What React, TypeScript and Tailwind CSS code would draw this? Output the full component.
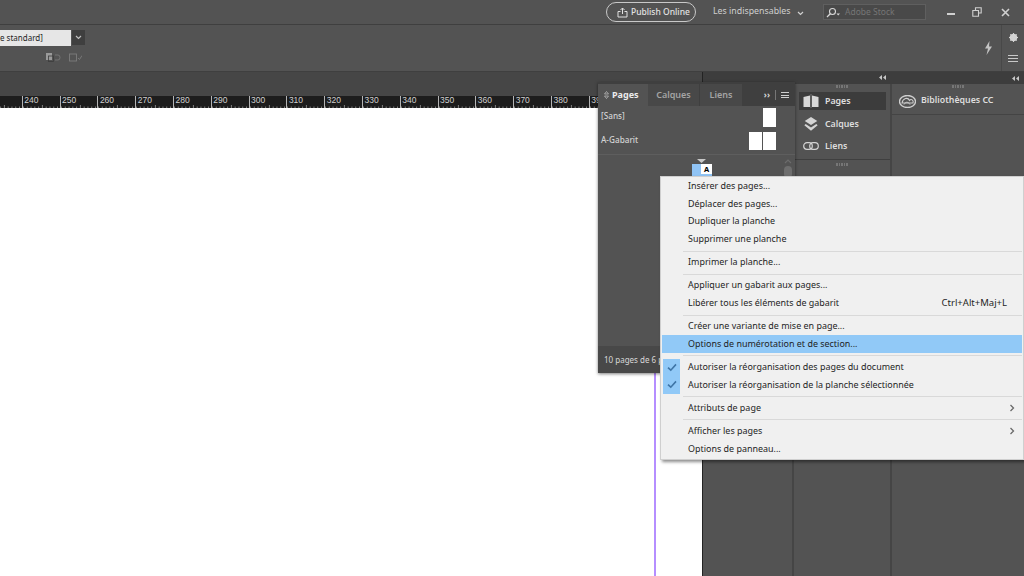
import React from "react";

const rulerNums = [0, 240, 250, 260, 270, 280, 290, 300, 310, 320, 330, 340, 350, 360, 370, 380, 390];

function Ruler() {
  return (
    <div className="relative h-[12px] bg-[#1d1d1d] flex overflow-hidden ml-[-16px] shrink-0">
      {rulerNums.map((n) => (
        <div key={n} className="relative w-[37.8px] shrink-0 h-full border-l border-[#b5b5b5]">
          {n > 0 && (
            <span className="absolute left-[1.5px] top-[-2px] text-[8.5px] leading-[12px] text-[#d0d0d0] font-['Liberation_Sans',sans-serif]">
              {n}
            </span>
          )}
          <svg className="absolute left-0 bottom-0" width="38" height="3" viewBox="0 0 38 3">
            {[0, 1, 2, 3, 4, 5, 6, 7, 8, 9].map((i) => (
              <line key={i} x1={i * 3.78 + 0.5} x2={i * 3.78 + 0.5} y1={i === 5 ? 0 : 1.5} y2="3" stroke="#9a9a9a" strokeWidth="0.8" />
            ))}
          </svg>
        </div>
      ))}
    </div>
  );
}

function Sep() {
  return (
    <div className="h-[5.7px] flex items-center pl-[22px] pr-[1px]">
      <div className="h-px w-full bg-[#d9d9d9]" />
    </div>
  );
}

function Item({ label, hl, check, arrow, sc }: { label: string; hl?: boolean; check?: boolean; arrow?: boolean; sc?: string }) {
  return (
    <div className={`relative h-[17.55px] mx-[1px] flex items-center pl-[26px] pr-[15px] whitespace-nowrap ${hl ? "bg-[#91c9f7]" : ""}`}>
      {check && (
        <div className="absolute left-[1px] top-0 h-full w-[17px] bg-[#91c9f7] flex items-center justify-center">
          <svg width="10" height="9" viewBox="0 0 10 9">
            <path d="M1 4.6 L3.8 7.2 L9 1.4" fill="none" stroke="#3f75a6" strokeWidth="1.6" />
          </svg>
        </div>
      )}
      <span className="mt-[-1.5px]">{label}</span>
      {sc && <span className="ml-auto text-[9.5px] mt-[-1px]">{sc}</span>}
      {arrow && (
        <svg className="ml-auto mr-[-8px]" width="6" height="8" viewBox="0 0 6 8">
          <path d="M1.5 1 L4.5 4 L1.5 7" fill="none" stroke="#6a6a6a" strokeWidth="1.3" />
        </svg>
      )}
    </div>
  );
}

function Handle() {
  return (
    <div className="flex justify-center gap-px">
      {[0, 1, 2, 3, 4].map((i) => (
        <div key={i} className="w-[1.5px] h-[3px] bg-[#777777]" />
      ))}
    </div>
  );
}

function Collapse() {
  return (
    <svg width="7" height="5" viewBox="0 0 7 5">
      <path d="M3 0 L0 2.5 L3 5 Z M7 0 L4 2.5 L7 5 Z" fill="#c8c8c8" />
    </svg>
  );
}

function PagesIcon({ c = "#d8d8d8" }: { c?: string }) {
  return (
    <svg width="16" height="14" viewBox="0 0 16 14">
      <path d="M0.5 3 L7 1.5 V13 H0.5 Z M9 1.5 L15.5 3 V13 H9 Z" fill={c} />
      <path d="M8 0 V14" stroke="#8a8a8a" strokeWidth="0.8" />
    </svg>
  );
}

export default function App() {
  return (
    <div className="relative w-[1024px] h-[576px] overflow-hidden bg-[#535353] font-['Noto_Sans',sans-serif]">
      {/* Application bar */}
      <div className="h-[25px] flex items-center border-b border-[#3f3f3f] bg-[#535353]">
        <div className="ml-[606px] w-[90px] h-[20px] rounded-full border border-[#c9c9c9] flex items-center pl-[10px] gap-[3px] text-[8.5px] font-medium text-[#e2e2e2]">
          <svg width="11" height="11" viewBox="0 0 11 11">
            <path d="M3.5 4.5 H1 V10 H10 V4.5 H7.5 M5.5 7 V1 M3.5 3 L5.5 1 L7.5 3" fill="none" stroke="#e0e0e0" strokeWidth="1" />
          </svg>
          <span className="whitespace-nowrap">Publish Online</span>
        </div>
        <span className="ml-[17px] text-[8.8px] text-[#cfcfcf] whitespace-nowrap w-[77px]">Les indispensables</span>
        <svg className="ml-[7px] mt-[2px]" width="7" height="5" viewBox="0 0 7 5">
          <path d="M1 1 L3.5 3.5 L6 1" fill="none" stroke="#d0d0d0" strokeWidth="1.2" />
        </svg>
        <div className="ml-[19px] w-[103px] h-[16px] bg-[#494949] border border-[#5f5f5f] flex items-center pl-[2px] gap-[5px]">
          <svg width="14" height="11" viewBox="0 0 14 11">
            <circle cx="6.5" cy="4.5" r="3" fill="none" stroke="#d8d8d8" strokeWidth="1.1" />
            <path d="M4.3 6.8 L1 10" stroke="#d8d8d8" strokeWidth="1.3" />
            <path d="M10.5 6.5 H14 L12.2 8.5 Z" fill="#d8d8d8" />
          </svg>
          <span className="text-[8.5px] text-[#767676] whitespace-nowrap">Adobe Stock</span>
        </div>
        <div className="ml-[8px] flex items-center">
          <div className="w-[33px] flex justify-center"><div className="w-[8px] h-[2px] bg-[#d0d0d0] mt-[3px]" /></div>
          <div className="w-[20px] flex justify-center">
            <svg width="10" height="10" viewBox="0 0 10 10">
              <path d="M3.5 3 V0.8 H9.2 V6 H7 M0.8 3.5 H6.5 V9.2 H0.8 Z" fill="none" stroke="#d0d0d0" strokeWidth="1.1" />
            </svg>
          </div>
          <div className="w-[37px] flex justify-center">
            <svg width="9" height="9" viewBox="0 0 9 9">
              <path d="M1 1 L8 8 M8 1 L1 8" stroke="#d0d0d0" strokeWidth="1.6" />
            </svg>
          </div>
        </div>
      </div>

      {/* Control bar */}
      <div className="relative h-[47px] flex border-b border-[#3f3f3f]">
        <div className="w-[85px] pt-[5px]">
          <div className="flex items-start gap-px">
            <div className="w-[71px] h-[16px] bg-[#e6e6e6] text-[8px] leading-[15px] text-[#1f1f1f] whitespace-nowrap overflow-hidden">
              e standard]
            </div>
            <div className="w-[13px] h-[15px] bg-[#3f3f3f] flex items-center justify-center">
              <svg width="7" height="5" viewBox="0 0 7 5">
                <path d="M1 1 L3.5 3.5 L6 1" fill="none" stroke="#c0c0c0" strokeWidth="1.2" />
              </svg>
            </div>
          </div>
          <div className="mt-[7px] ml-[46px] flex items-center gap-[8px]">
            <svg width="15" height="9" viewBox="0 0 15 9">
              <rect x="0" y="0" width="6" height="7" fill="#9a9a9a" />
              <rect x="2.5" y="3" width="5" height="5.5" fill="none" stroke="#3c3c3c" strokeWidth="0.8" />
              <path d="M9 2 H12 Q14 2 14 4.5 Q14 7 12 7 H9" fill="none" stroke="#777777" strokeWidth="0.9" />
            </svg>
            <svg width="13" height="9" viewBox="0 0 13 9">
              <rect x="0.5" y="1" width="7" height="7" fill="none" stroke="#7c7c7c" strokeWidth="0.9" />
              <path d="M9 5 L10.5 6.5 L13 2.5" fill="none" stroke="#7c7c7c" strokeWidth="0.9" />
            </svg>
          </div>
        </div>
        <div className="ml-auto flex">
          <div className="flex items-center pr-[8px]">
            <svg width="9" height="14" viewBox="0 0 9 14">
              <path d="M5.5 0 L1 7.5 H4 L2.5 14 L8 5.5 H5 Z" fill="#c4c4c4" />
            </svg>
          </div>
          <div className="w-[23px] border-l border-[#484848] flex flex-col items-center pt-[8px] gap-[13px]">
            <svg width="9" height="9" viewBox="0 0 9 9">
              <circle cx="4.5" cy="4.5" r="2.8" fill="none" stroke="#d4d4d4" strokeWidth="2" />
              <path d="M4.5 0 V9 M0 4.5 H9 M1.3 1.3 L7.7 7.7 M7.7 1.3 L1.3 7.7" stroke="#d4d4d4" strokeWidth="1" />
            </svg>
            <div className="w-[10px] flex flex-col gap-[2px]">
              <div className="h-px bg-[#c8c8c8]" />
              <div className="h-px bg-[#c8c8c8]" />
              <div className="h-px bg-[#c8c8c8]" />
            </div>
          </div>
        </div>
      </div>

      {/* Main region */}
      <div className="flex h-[504px]">
        <div className="w-[702px] flex flex-col shrink-0 overflow-hidden">
          <div className="h-[24px] bg-[#464646] shrink-0" />
          <Ruler />
          <div className="flex-1 bg-white pl-[654px]">
            <div className="w-[2px] h-full bg-[#b58eff]" />
          </div>
        </div>
        <div className="flex-1 flex flex-col border-l border-[#232323]">
          <div className="h-[12px] bg-[#3d3d3d] flex items-center justify-end shrink-0">
            <div className="mr-[5px]"><Collapse /></div>
          </div>
          <div className="flex-1 flex">
            <div className="w-[89px] shrink-0" />
            <div className="w-[100px] shrink-0 border-x-2 border-[#454545] flex flex-col">
              <div className="pt-[1px] pb-[4px]"><Handle /></div>
              <div className="h-[18px] ml-[5px] mr-[4px] bg-[#3c3c3c] flex items-center gap-[6px] pl-[4px] text-[8.8px] font-semibold text-[#e0e0e0]">
                <PagesIcon />
                <span className="mt-[1px]">Pages</span>
              </div>
              <div className="h-[22px] mt-[3px] flex items-center gap-[6px] pl-[9px] text-[8.8px] font-semibold text-[#dedede]">
                <svg width="16" height="16" viewBox="0 0 18 16">
                  <path d="M9 0 L16 4.5 L9 9 L2 4.5 Z" fill="#d4d4d4" />
                  <path d="M3 8 L9 12 L15 8 L16.5 9.5 L9 15.5 L1.5 9.5 Z" fill="#d4d4d4" />
                </svg>
                <span className="mt-[1px]">Calques</span>
              </div>
              <div className="h-[22px] flex items-center gap-[6px] pl-[9px] text-[8.8px] font-semibold text-[#dedede]">
                <svg width="16" height="8" viewBox="0 0 16 8">
                  <rect x="0.7" y="0.7" width="8.6" height="6.6" rx="3.3" fill="none" stroke="#d4d4d4" strokeWidth="1.2" />
                  <rect x="6.7" y="0.7" width="8.6" height="6.6" rx="3.3" fill="none" stroke="#d4d4d4" strokeWidth="1.2" />
                </svg>
                <span className="mt-[1px]">Liens</span>
              </div>
              <div className="mt-[2px] border-t border-[#3f3f3f] pt-[3px]">
                <Handle />
              </div>
            </div>
            <div className="flex-1 flex flex-col">
              <div className="pt-[1px]"><Handle /></div>
              <div className="h-[27px] border-b border-[#444444] flex items-center gap-[5px] pl-[7px] text-[8.8px] font-semibold text-[#dedede]">
                <svg width="17" height="13" viewBox="0 0 17 13">
                  <ellipse cx="8.5" cy="6.5" rx="8" ry="6" fill="none" stroke="#cfcfcf" strokeWidth="1.4" />
                  <path d="M3 8 C4 3 9 2 10.5 5.5 C12 3.5 15 5 14 8 Z" fill="none" stroke="#cfcfcf" strokeWidth="1.1" />
                  <path d="M5 9.5 C7 6 9.5 7 11 9.5" fill="none" stroke="#cfcfcf" strokeWidth="1" />
                </svg>
                <span className="whitespace-nowrap">Bibliothèques CC</span>
              </div>
            </div>
          </div>
        </div>
      </div>

      {/* middle dock collapse arrow */}
      <div className="absolute left-[879px] top-[75px]"><Collapse /></div>

      {/* Floating Pages panel */}
      <div className="absolute left-[598px] top-[82px] w-[197px] h-[291px] bg-[#535353] shadow-[0_1px_3px_rgba(0,0,0,0.5)] flex flex-col text-[#d2d2d2]">
        <div className="h-[24px] bg-[#3f3f3f] flex items-end shrink-0">
          <div className="w-[50px] h-[22px] bg-[#535353] flex items-center pl-[6px] gap-[3px] text-[9px] font-bold text-[#ececec]">
            <svg width="5" height="8" viewBox="0 0 5 8">
              <path d="M2.5 0.5 L4.5 3 H0.5 Z M2.5 7.5 L4.5 5 H0.5 Z" fill="none" stroke="#c4c4c4" strokeWidth="0.7" />
            </svg>
            <span>Pages</span>
          </div>
          <div className="w-[52px] h-[22px] bg-[#484848] border-r border-[#3f3f3f] flex items-center justify-center text-[9px] font-semibold text-[#a4a4a4]">Calques</div>
          <div className="w-[43px] h-[22px] bg-[#484848] border-r border-[#3f3f3f] flex items-center justify-center text-[9px] font-semibold text-[#a4a4a4]">Liens</div>
          <div className="flex-1 h-[22px] flex items-center justify-end pr-[6px] gap-[5px]">
            <span className="text-[8.5px] font-bold text-[#d8d8d8] leading-none">››</span>
            <div className="w-px h-[10px] bg-[#777777]" />
            <div className="w-[8px] flex flex-col gap-[1.5px]">
              <div className="h-px bg-[#cfcfcf]" />
              <div className="h-px bg-[#cfcfcf]" />
              <div className="h-px bg-[#cfcfcf]" />
            </div>
          </div>
        </div>
        <div className="h-[49px] border-b border-[#5e5e5e] pr-[19px] pl-[3px] pt-[2px] shrink-0 flex flex-col gap-[5px] text-[8.2px] font-medium">
          <div className="h-[19px] flex items-center justify-between">
            <span className="mt-[-2px]">[Sans]</span>
            <div className="w-[13px] h-[19px] bg-white" />
          </div>
          <div className="h-[18px] flex items-center justify-between">
            <span className="mt-[-2px]">A-Gabarit</span>
            <div className="flex gap-px">
              <div className="w-[13px] h-[18px] bg-white" />
              <div className="w-[13px] h-[18px] bg-white" />
            </div>
          </div>
        </div>
        <div className="flex-1 relative">
          <div className="absolute left-[94px] top-[9px] w-[20px] h-[14px] bg-[#90c4f5] flex justify-end">
            <div className="w-[11px] h-[10px] bg-white text-[7.5px] font-bold leading-[10px] text-black text-center">A</div>
          </div>
          <svg className="absolute left-[99px] top-[4px]" width="9" height="4" viewBox="0 0 9 4">
            <path d="M0 0 H9 L4.5 4 Z" fill="#c8c8c8" />
          </svg>
          <div className="absolute right-[3px] top-[4px] w-[9px] h-[20px] flex flex-col items-center">
            <svg width="8" height="5" viewBox="0 0 8 5"><path d="M1 4 L4 1 L7 4" fill="none" stroke="#6c6c6c" strokeWidth="1.2" /></svg>
            <div className="mt-[2px] w-[8px] h-[12px] rounded-full bg-[#6e6e6e]" />
          </div>
        </div>
        <div className="h-[27px] bg-[#484848] flex items-center pl-[6px] text-[8px] text-[#d8d8d8] whitespace-nowrap shrink-0">
          10 pages de 6 planches
        </div>
      </div>

      {/* Context menu */}
      <div className="absolute left-[660px] top-[176px] w-[364px] h-[284px] bg-[#f0f0f0] border border-[#cfcfcf] shadow-[2px_2px_3px_rgba(0,0,0,0.45)] pt-[1px] text-[8.95px] text-[#1e1e1e] font-['Noto_Sans',sans-serif]">
        <Item label="Insérer des pages..." />
        <Item label="Déplacer des pages..." />
        <Item label="Dupliquer la planche" />
        <Item label="Supprimer une planche" />
        <Sep />
        <Item label="Imprimer la planche..." />
        <Sep />
        <Item label="Appliquer un gabarit aux pages..." />
        <Item label="Libérer tous les éléments de gabarit" sc="Ctrl+Alt+Maj+L" />
        <Sep />
        <Item label="Créer une variante de mise en page..." />
        <Item label="Options de numérotation et de section..." hl />
        <Sep />
        <Item label="Autoriser la réorganisation des pages du document" check />
        <Item label="Autoriser la réorganisation de la planche sélectionnée" check />
        <Sep />
        <Item label="Attributs de page" arrow />
        <Sep />
        <Item label="Afficher les pages" arrow />
        <Item label="Options de panneau..." />
      </div>
    </div>
  );
}
